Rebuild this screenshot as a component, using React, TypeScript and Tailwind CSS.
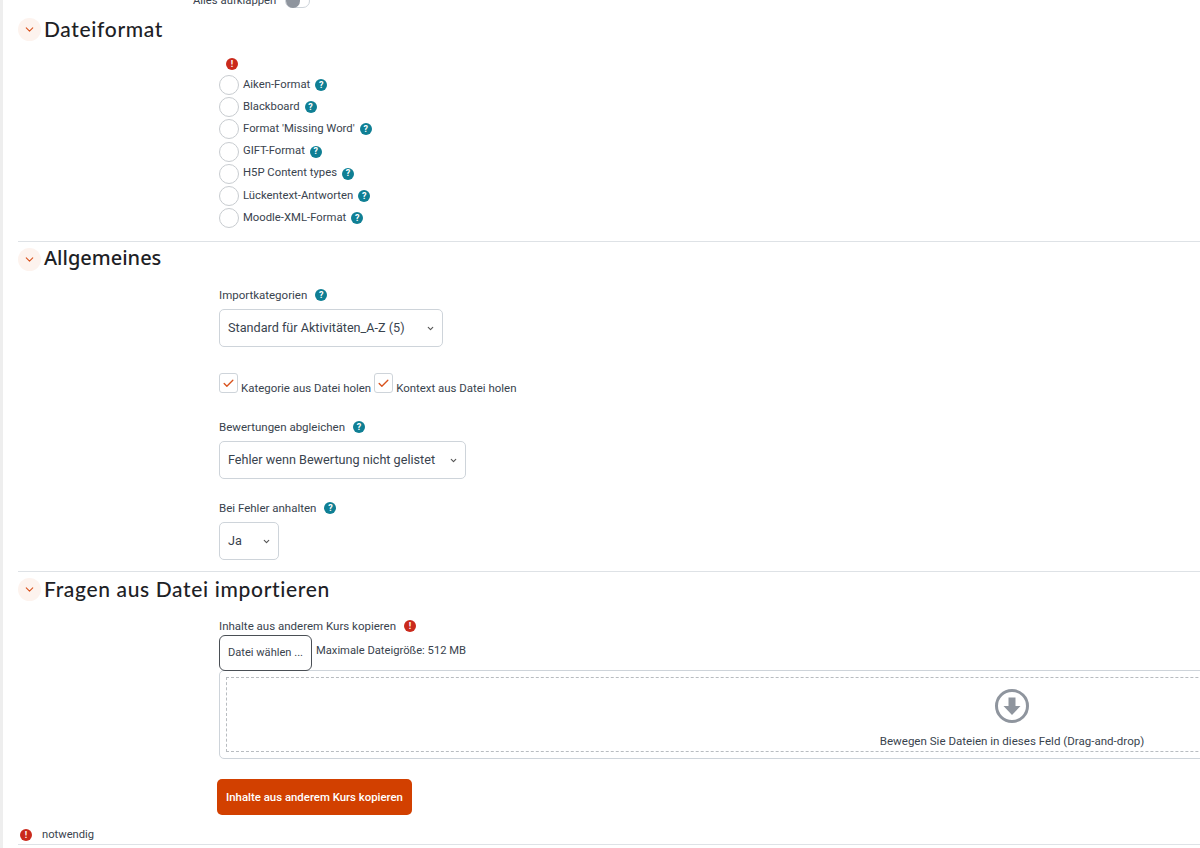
import React from 'react'
import { ChevronDown, Check } from 'lucide-react'

const formats = [
  'Aiken-Format',
  'Blackboard',
  "Format 'Missing Word'",
  'GIFT-Format',
  'H5P Content types',
  'Lückentext-Antworten',
  'Moodle-XML-Format',
]

function HelpIcon() {
  return (
    <span className="flex h-[12px] w-[12px] shrink-0 items-center justify-center rounded-full bg-[#0f7f94] text-[9px] leading-none font-bold text-white">
      ?
    </span>
  )
}

function RequiredIcon() {
  return (
    <span className="flex h-[12px] w-[12px] shrink-0 items-center justify-center rounded-full bg-[#ca2a1c] text-[9px] leading-none font-bold text-white">
      !
    </span>
  )
}

function SectionHeading({ title, font }: { title: string; font: string }) {
  return (
    <div className="flex h-[23px] items-center">
      <span className="flex h-[23px] w-[23px] items-center justify-center rounded-full bg-[#fdf3ee]">
        <ChevronDown className="h-[13px] w-[13px] text-[#d9531e]" strokeWidth={2} />
      </span>
      <h3 className={`mt-[-3px] ml-[3px] leading-none font-medium text-[#1d2125] ${font}`}>{title}</h3>
    </div>
  )
}

function SelectBox({ value, width }: { value: string; width: string }) {
  return (
    <div className={`flex h-[38px] items-center justify-between rounded-[5px] border border-[#ced4da] pr-[7px] pl-[8px] text-[12.65px] text-[#39434e] ${width}`}>
      <span>{value}</span>
      <ChevronDown className="h-[9px] w-[9px] text-[#555]" strokeWidth={3} />
    </div>
  )
}

function FieldLabel({ label }: { label: string }) {
  return (
    <div className="flex h-[14px] items-center gap-[8px] text-[11.5px] text-[#39434e]">
      <span>{label}</span>
      <HelpIcon />
    </div>
  )
}

function CheckField({ label }: { label: string }) {
  return (
    <div className="flex items-start">
      <span className="flex h-[20px] w-[19px] items-center justify-center rounded-[3px] border border-[#ced4da]">
        <Check className="h-[13px] w-[13px] text-[#d9531e]" strokeWidth={2.5} />
      </span>
      <span className="mt-[7px] ml-[3px] text-[11.45px] leading-[16px] text-[#39434e]">{label}</span>
    </div>
  )
}

export default function App() {
  return (
    <div className="flex h-[848px] w-[1200px] overflow-hidden bg-white font-['Roboto',sans-serif]">
      <div className="w-[3px] shrink-0 bg-[#eeeeee]" />
      <div className="flex-1 pl-[15px]">
        {/* collapse all toggle, cut off by the top of the page */}
        <div className="mt-[-6px] ml-[175px] flex h-[14px] items-center gap-[9px] text-[11.3px] text-[#39434e]">
          <span>Alles aufklappen</span>
          <span className="flex h-[14px] w-[25px] items-center rounded-full border border-[#ced4da]">
            <span className="h-[14px] w-[14px] rounded-full bg-[#8f959e]" />
          </span>
        </div>

        <div className="mt-[10px]">
          <SectionHeading title="Dateiformat" font="font-['Lato',sans-serif] text-[21px] tracking-[0.65px]" />
        </div>
        <div className="mt-[17px] ml-[208px]">
          <RequiredIcon />
        </div>
        <div className="mt-[4px] ml-[201px] flex flex-col">
          {formats.map((f) => (
            <div key={f} className="flex h-[22.2px] items-center">
              <span className="h-[20px] w-[20px] rounded-full border border-[#c8ccd0]" />
              <span className="ml-[4px] text-[11.3px] text-[#39434e]">{f}</span>
              <span className="ml-[5px]">
                <HelpIcon />
              </span>
            </div>
          ))}
        </div>
        <div className="mt-[12px] h-px bg-[#dee2e6]" />

        <div className="mt-[6px]">
          <SectionHeading title="Allgemeines" font="font-['Noto_Sans',sans-serif] text-[20px]" />
        </div>
        <div className="mt-[17px] ml-[201px]">
          <FieldLabel label="Importkategorien" />
          <div className="mt-[7px]">
            <SelectBox value="Standard für Aktivitäten_A-Z (5)" width="w-[224px]" />
          </div>
          <div className="mt-[26px] flex">
            <CheckField label="Kategorie aus Datei holen" />
            <div className="ml-[3px]">
              <CheckField label="Kontext aus Datei holen" />
            </div>
          </div>
          <div className="mt-[24px]">
            <FieldLabel label="Bewertungen abgleichen" />
          </div>
          <div className="mt-[7px]">
            <SelectBox value="Fehler wenn Bewertung nicht gelistet" width="w-[247px]" />
          </div>
          <div className="mt-[22px]">
            <FieldLabel label="Bei Fehler anhalten" />
          </div>
          <div className="mt-[7px]">
            <SelectBox value="Ja" width="w-[60px]" />
          </div>
        </div>
        <div className="mt-[11px] h-px bg-[#dee2e6]" />

        <div className="mt-[6px]">
          <SectionHeading title="Fragen aus Datei importieren" font="font-['Lato',sans-serif] text-[21px] tracking-[0.65px]" />
        </div>
        <div className="mt-[18px] ml-[201px]">
          <div className="flex h-[14px] items-center gap-[8px] text-[11.5px] text-[#39434e]">
            <span>Inhalte aus anderem Kurs kopieren</span>
            <RequiredIcon />
          </div>
          <div className="mt-[2px] flex items-start">
            <span className="flex h-[36px] w-[93px] items-center justify-center rounded-[6px] border border-[#4a4f55] text-[11.1px] text-[#39434e]">
              Datei wählen ...
            </span>
            <span className="mt-[8px] ml-[4px] text-[11.2px] leading-[16px] text-[#39434e]">Maximale Dateigröße: 512 MB</span>
          </div>
          <div className="mt-[-1px] h-[89px] w-[1600px] rounded-[5px] border border-[#ced4da] p-[6px]">
            <div className="flex h-[75px] w-[1572px] flex-col items-center border border-dashed border-[#b8bcc0] pt-[10px]">
              <svg width="36" height="36" viewBox="0 0 36 36" fill="none">
                <circle cx="18" cy="18" r="15.5" stroke="#8f959e" strokeWidth="3" />
                <path d="M14.5 9.5h7v8.500h5L18 27 9.500 18h5z" fill="#8f959e" />
              </svg>
              <span className="mt-[10px] text-[11.55px] leading-[14px] text-[#39434e]">Bewegen Sie Dateien in dieses Feld (Drag-and-drop)</span>
            </div>
          </div>
          <button className="mt-[20px] ml-[-2px] flex h-[36px] w-[195px] items-center justify-center rounded-[5px] bg-[#d24000] text-[11.4px] font-medium text-white">
            Inhalte aus anderem Kurs kopieren
          </button>
        </div>
        <div className="mt-[14px] ml-[2px] flex h-[12px] items-center gap-[10px] text-[11.2px] text-[#39434e]">
          <RequiredIcon />
          <span>notwendig</span>
        </div>
        <div className="mt-[3px] h-px bg-[#dee2e6]" />
      </div>
    </div>
  )
}
